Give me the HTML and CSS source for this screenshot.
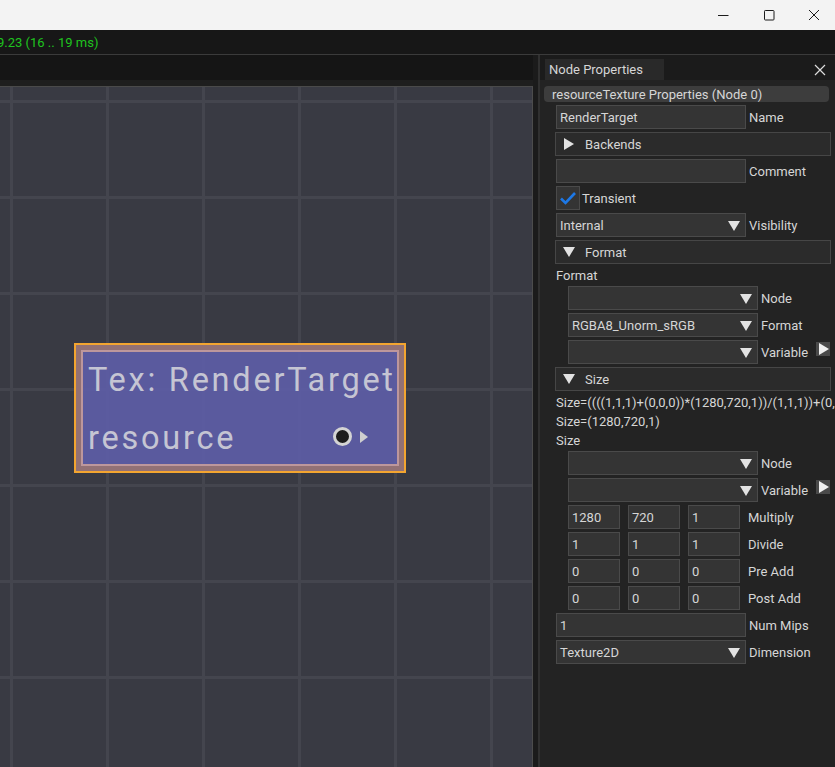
FILE: index.html
```html
<!DOCTYPE html>
<html>
<head>
<meta charset="utf-8">
<link rel="stylesheet" href="styles.css">
</head>
<body>
<div class="titlebar">
  <div class="cap"><svg width="12" height="12" viewBox="0 0 12 12"><path d="M1 6.5H11.5" stroke="#1b1b1b" stroke-width="1"/></svg></div>
  <div class="cap"><svg width="12" height="12" viewBox="0 0 12 12"><rect x="1.5" y="1.5" width="9.5" height="9.5" rx="0.8" fill="none" stroke="#1b1b1b" stroke-width="1"/></svg></div>
  <div class="cap cap-last"><svg width="12" height="12" viewBox="0 0 12 12"><path d="M1 1L11 11M11 1L1 11" stroke="#1b1b1b" stroke-width="1"/></svg></div>
</div>
<div class="statusbar"><span class="fps">9.23 (16 .. 19 ms)</span></div>
<div class="main">
  <div class="left">
    <div class="left-head"></div>
    <div class="left-sub"></div>
    <div class="canvas">
      <div class="node">
        <div class="node-frame">
          <div class="node-body">
            <div class="node-line">Tex: RenderTarget</div>
            <div class="node-line">resource</div>
            <div class="pin"></div>
            <div class="pin-arrow"></div>
          </div>
        </div>
      </div>
    </div>
  </div>
  <div class="sep"></div>
  <div class="divider"></div>
  <div class="panel">
    <div class="panel-head">
      <div class="tab">Node Properties</div>
      <svg class="panel-close" width="12" height="12" viewBox="0 0 12 12"><path d="M1 1L11 11M11 1L1 11" stroke="#dcdcdc" stroke-width="1.2"/></svg>
    </div>
    <div class="panel-body">
      <div class="main-header">resourceTexture Properties (Node 0)</div>
      <div class="rows">
        <div class="row"><div class="field">RenderTarget</div><span class="lbl">Name</span></div>
        <div class="row"><div class="chead"><span class="tri-right"></span><span>Backends</span></div></div>
        <div class="row"><div class="field"></div><span class="lbl">Comment</span></div>
        <div class="row"><div class="check"><svg width="18" height="14" viewBox="0 0 18 14"><path d="M2 7.5L6.5 12L16 2" fill="none" stroke="#1d78e6" stroke-width="2.6"/></svg></div><span class="lbl lbl-check">Transient</span></div>
        <div class="row"><div class="field combo">Internal<span class="tri-down"></span></div><span class="lbl">Visibility</span></div>
        <div class="row"><div class="chead"><span class="tri-down hdr"></span><span>Format</span></div></div>
        <div class="textrow">Format</div>
        <div class="row indent"><div class="field combo"><span class="tri-down"></span></div><span class="lbl">Node</span></div>
        <div class="row indent"><div class="field combo">RGBA8_Unorm_sRGB<span class="tri-down"></span></div><span class="lbl">Format</span></div>
        <div class="row indent"><div class="field combo"><span class="tri-down"></span></div><span class="lbl">Variable</span><div class="mini-btn"><span class="tri-mini"></span></div></div>
        <div class="row"><div class="chead"><span class="tri-down hdr"></span><span>Size</span></div></div>
        <div class="textrow">Size=((((1,1,1)+(0,0,0))*(1280,720,1))/(1,1,1))+(0,0,0)</div>
        <div class="textrow">Size=(1280,720,1)</div>
        <div class="textrow">Size</div>
        <div class="row indent"><div class="field combo"><span class="tri-down"></span></div><span class="lbl">Node</span></div>
        <div class="row indent"><div class="field combo"><span class="tri-down"></span></div><span class="lbl">Variable</span><div class="mini-btn"><span class="tri-mini"></span></div></div>
        <div class="row indent nums"><div class="field num">1280</div><div class="field num">720</div><div class="field num">1</div><span class="lbl lbl-num">Multiply</span></div>
        <div class="row indent nums"><div class="field num">1</div><div class="field num">1</div><div class="field num">1</div><span class="lbl lbl-num">Divide</span></div>
        <div class="row indent nums"><div class="field num">0</div><div class="field num">0</div><div class="field num">0</div><span class="lbl lbl-num">Pre Add</span></div>
        <div class="row indent nums"><div class="field num">0</div><div class="field num">0</div><div class="field num">0</div><span class="lbl lbl-num">Post Add</span></div>
        <div class="row"><div class="field">1</div><span class="lbl">Num Mips</span></div>
        <div class="row"><div class="field combo">Texture2D<span class="tri-down"></span></div><span class="lbl">Dimension</span></div>
      </div>
    </div>
  </div>
</div>
</body>
</html>
```

FILE: styles.css
```css
* { box-sizing: border-box; }
html, body {
  margin: 0;
  padding: 0;
}
body {
  width: 835px;
  height: 767px;
  overflow: hidden;
  background: #232323;
  font-family: Roboto, "Noto Sans", sans-serif;
  font-size: 13px;
  color: #d6d6d6;
}

.titlebar {
  height: 30px;
  background: #f3f3f3;
  display: flex;
  justify-content: flex-end;
}
.cap {
  width: 46px;
  height: 30px;
  display: flex;
  align-items: center;
  justify-content: center;
}
.cap-last { width: 43px; }

.statusbar {
  height: 24px;
  background: #171717;
  display: flex;
  align-items: center;
}
.fps {
  color: #1fc41f;
  margin-left: -3px;
  font-size: 13px;
}

.main {
  display: flex;
  height: 713px;
  border-top: 1px solid #3b3b3b;
}

.left {
  width: 533px;
  display: flex;
  flex-direction: column;
}
.left-head {
  height: 25px;
  background: #151515;
}
.left-sub {
  height: 6px;
  background: #1e1e1e;
}
.canvas {
  flex: 1;
  position: relative;
  border-top: 1px solid #4a4a4a;
  border-right: 1px solid #4c4c4c;
  background-color: #393a43;
  background-image:
    linear-gradient(to right, #44454e 3px, transparent 3px),
    linear-gradient(to bottom, #44454e 3px, transparent 3px);
  background-size: 96px 96px;
  background-position: 10px 13px;
}

.node {
  position: absolute;
  left: 74px;
  top: 256px;
  width: 332px;
  height: 130px;
  border: 2px solid #f3a530;
}
.node-frame {
  height: 100%;
  border: 5px solid #927175;
}
.node-body {
  position: relative;
  height: 100%;
  border: 2px solid #bd979c;
  background: rgba(92, 92, 166, 0.93);
  padding-left: 5px;
}
.node-line {
  font-size: 32.5px;
  letter-spacing: 2.75px;
  line-height: 57px;
  color: #c5c5d3;
  white-space: nowrap;
}
.node-line + .node-line { margin-top: 1px; }
.pin {
  position: absolute;
  left: 250px;
  top: 75px;
  width: 19px;
  height: 19px;
  border-radius: 50%;
  border: 3px solid #d4d4d4;
  background: #1c1c1c;
}
.pin-arrow {
  position: absolute;
  left: 277px;
  top: 79px;
  width: 0;
  height: 0;
  border-top: 6px solid transparent;
  border-bottom: 6px solid transparent;
  border-left: 8px solid #cfcfcf;
}

.sep {
  width: 5px;
  background: #1b1b1b;
}
.divider {
  width: 2px;
  background: #303030;
}

.panel {
  flex: 1;
  display: flex;
  flex-direction: column;
  background: #232323;
  overflow: hidden;
}
.panel-head {
  height: 25px;
  background: #1b1b1b;
  display: flex;
  align-items: flex-end;
  position: relative;
}
.tab {
  margin-left: 5px;
  width: 119px;
  height: 21px;
  background: #292929;
  padding-left: 4px;
  line-height: 22px;
}
.panel-close {
  position: absolute;
  right: 9px;
  top: 9px;
}

.panel-body {
  padding: 6px 4px 0 4px;
}
.main-header {
  height: 16px;
  border-radius: 4px;
  background: #3d3d3d;
  padding-left: 8px;
  line-height: 17px;
  margin-right: 2px;
}
.rows {
  margin-top: 3px;
  padding-left: 12px;
  display: flex;
  flex-direction: column;
  gap: 3px;
}
.row {
  height: 24px;
  display: flex;
  align-items: center;
}
.indent { padding-left: 12px; }
.textrow {
  height: 16px;
  line-height: 17px;
  white-space: nowrap;
}

.field {
  width: 190px;
  height: 24px;
  background: #343434;
  border: 1px solid #4a4a4a;
  padding-left: 3px;
  padding-top: 1px;
  line-height: 22px;
  position: relative;
  white-space: nowrap;
}
.lbl {
  margin-left: 3px;
  padding-top: 1px;
  white-space: nowrap;
}
.lbl-check { margin-left: 2px; }
.lbl-num { margin-left: 8px; }
.num {
  width: 52px;
  margin-right: 8px;
}
.num:nth-of-type(3) { margin-right: 0; }

.tri-down {
  position: absolute;
  right: 5px;
  top: 7px;
  width: 0;
  height: 0;
  border-left: 6px solid transparent;
  border-right: 6px solid transparent;
  border-top: 10px solid #e2e2e2;
}
.tri-down.hdr {
  position: static;
  display: inline-block;
  margin: 0 10px 0 7px;
}
.tri-right {
  display: inline-block;
  width: 0;
  height: 0;
  border-top: 6px solid transparent;
  border-bottom: 6px solid transparent;
  border-left: 10px solid #e2e2e2;
  margin: 0 11px 0 8px;
}

.chead {
  width: 276px;
  height: 24px;
  margin-left: -1px;
  background: #2b2b2b;
  border: 1px solid #464646;
  display: flex;
  align-items: center;
}

.check {
  width: 24px;
  height: 24px;
  background: #343434;
  border: 1px solid #4a4a4a;
  display: flex;
  align-items: center;
  justify-content: center;
}

.mini-btn {
  margin-left: auto;
  margin-right: 1px;
  align-self: flex-start;
  margin-top: 2px;
  width: 14px;
  height: 14px;
  background: #4a4a4a;
  display: flex;
  align-items: center;
  justify-content: center;
}
.tri-mini {
  width: 0;
  height: 0;
  border-top: 6px solid transparent;
  border-bottom: 6px solid transparent;
  border-left: 10px solid #f0f0f0;
  margin-left: 2px;
}
```
